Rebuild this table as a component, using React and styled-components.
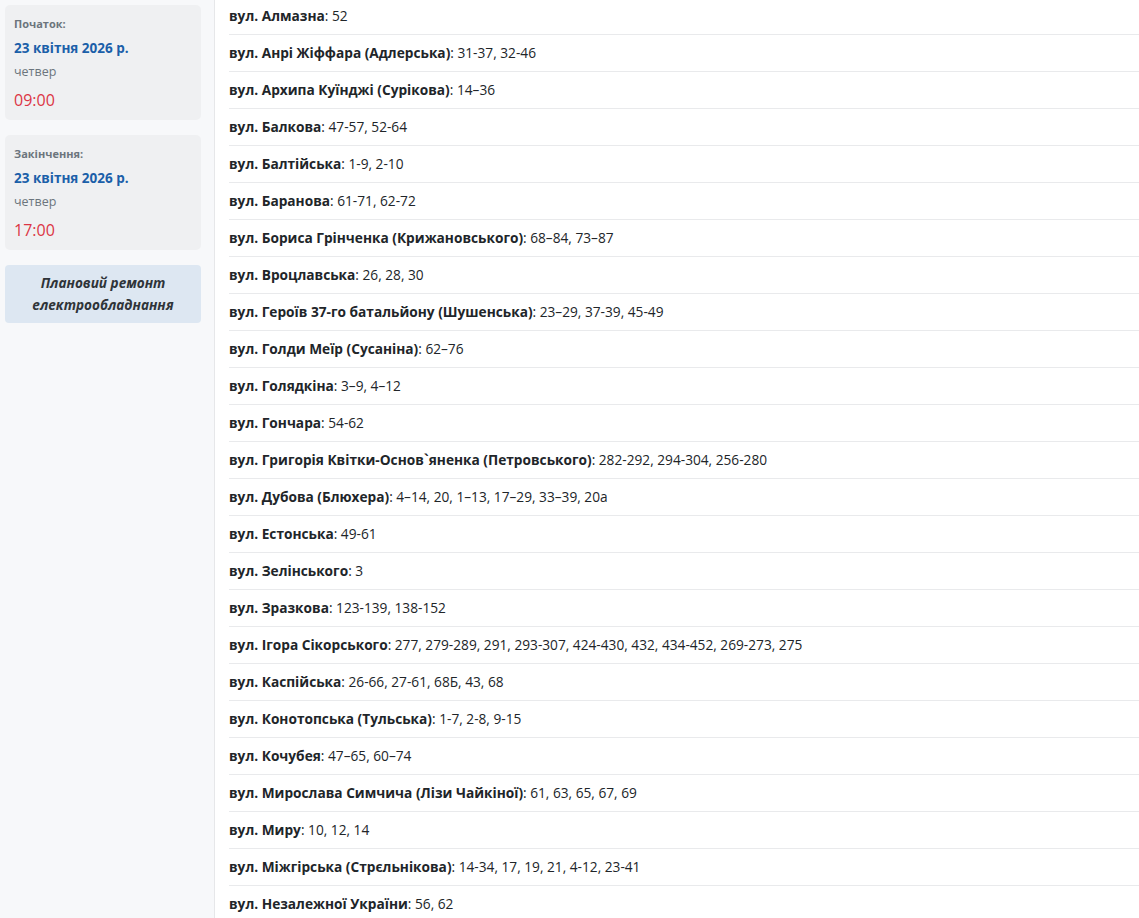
import React from "react";
import styled, { createGlobalStyle } from "styled-components";

const Global = createGlobalStyle`
  html, body { margin: 0; padding: 0; background: #fff; }
  body { font-family: "Open Sans", "Noto Sans", sans-serif; color: #212529; overflow: hidden; }
`;

const Page = styled.div`
  display: flex;
  height: 918px;
  overflow: hidden;
`;

const Sidebar = styled.aside`
  flex: 0 0 215px;
  box-sizing: border-box;
  background: #f7f8fa;
  border-right: 1px solid #e6e7e9;
  padding: 5px 13px 0 5px;
  display: flex;
  flex-direction: column;
  gap: 15px;
`;

const Card = styled.div`
  height: 115px;
  box-sizing: border-box;
  background: #eff0f2;
  border-radius: 5px;
  padding: 9px 9px 0;
  display: flex;
  flex-direction: column;
`;

const Label = styled.div`
  font-size: 11px;
  font-weight: 700;
  color: #6c757d;
  line-height: 20px;
`;

const DateText = styled.div`
  font-size: 13.5px;
  font-weight: 700;
  color: #1b5fa9;
  line-height: 28px;
`;

const Weekday = styled.div`
  font-size: 12.5px;
  color: #6c757d;
  line-height: 20px;
`;

const Time = styled.div`
  font-size: 16px;
  font-weight: 400;
  color: #dc3545;
  line-height: 36px;
`;

const Note = styled.div`
  background: #dde7f2;
  border-radius: 4px;
  padding: 7px 8px;
  text-align: center;
  font-style: italic;
  font-weight: 700;
  font-size: 13.6px;
  line-height: 22px;
  color: #2f3439;
`;

const Content = styled.main`
  flex: 1;
  padding-left: 14px;
  margin-top: -2px;
`;

const Row = styled.div`
  height: 37px;
  box-sizing: border-box;
  padding-bottom: 2px;
  display: flex;
  align-items: center;
  font-size: 13.7px;
  color: #212529;
  border-bottom: 1px solid #e9eaec;
  white-space: nowrap;
`;

const Street = styled.b`
  font-weight: 700;
`;

const rows = [
  ["вул. Алмазна", "52"],
  ["вул. Анрі Жіффара (Адлерська)", "31-37, 32-46"],
  ["вул. Архипа Куїнджі (Сурікова)", "14–36"],
  ["вул. Балкова", "47-57, 52-64"],
  ["вул. Балтійська", "1-9, 2-10"],
  ["вул. Баранова", "61-71, 62-72"],
  ["вул. Бориса Грінченка (Крижановського)", "68–84, 73–87"],
  ["вул. Вроцлавська", "26, 28, 30"],
  ["вул. Героїв 37-го батальйону (Шушенська)", "23–29, 37-39, 45-49"],
  ["вул. Голди Меїр (Сусаніна)", "62–76"],
  ["вул. Голядкіна", "3–9, 4–12"],
  ["вул. Гончара", "54-62"],
  ["вул. Григорія Квітки-Основ`яненка (Петровського)", "282-292, 294-304, 256-280"],
  ["вул. Дубова (Блюхера)", "4–14, 20, 1–13, 17–29, 33–39, 20а"],
  ["вул. Естонська", "49-61"],
  ["вул. Зелінського", "3"],
  ["вул. Зразкова", "123-139, 138-152"],
  ["вул. Ігора Сікорського", "277, 279-289, 291, 293-307, 424-430, 432, 434-452, 269-273, 275"],
  ["вул. Каспійська", "26-66, 27-61, 68Б, 43, 68"],
  ["вул. Конотопська (Тульська)", "1-7, 2-8, 9-15"],
  ["вул. Кочубея", "47–65, 60–74"],
  ["вул. Мирослава Симчича (Лізи Чайкіної)", "61, 63, 65, 67, 69"],
  ["вул. Миру", "10, 12, 14"],
  ["вул. Міжгірська (Стрєльнікова)", "14-34, 17, 19, 21, 4-12, 23-41"],
  ["вул. Незалежної України", "56, 62"],
];

function TimeCard({ label, date, day, time }) {
  return (
    <Card>
      <Label>{label}</Label>
      <DateText>{date}</DateText>
      <Weekday>{day}</Weekday>
      <Time>{time}</Time>
    </Card>
  );
}

export default function App() {
  return (
    <>
      <Global />
      <Page>
        <Sidebar>
          <TimeCard label="Початок:" date="23 квітня 2026 р." day="четвер" time="09:00" />
          <TimeCard label="Закінчення:" date="23 квітня 2026 р." day="четвер" time="17:00" />
          <Note>Плановий ремонт електрообладнання</Note>
        </Sidebar>
        <Content>
          {rows.map(([s, n]) => (
            <Row key={s}>
              <Street>{s}</Street>: {n}
            </Row>
          ))}
        </Content>
      </Page>
    </>
  );
}
